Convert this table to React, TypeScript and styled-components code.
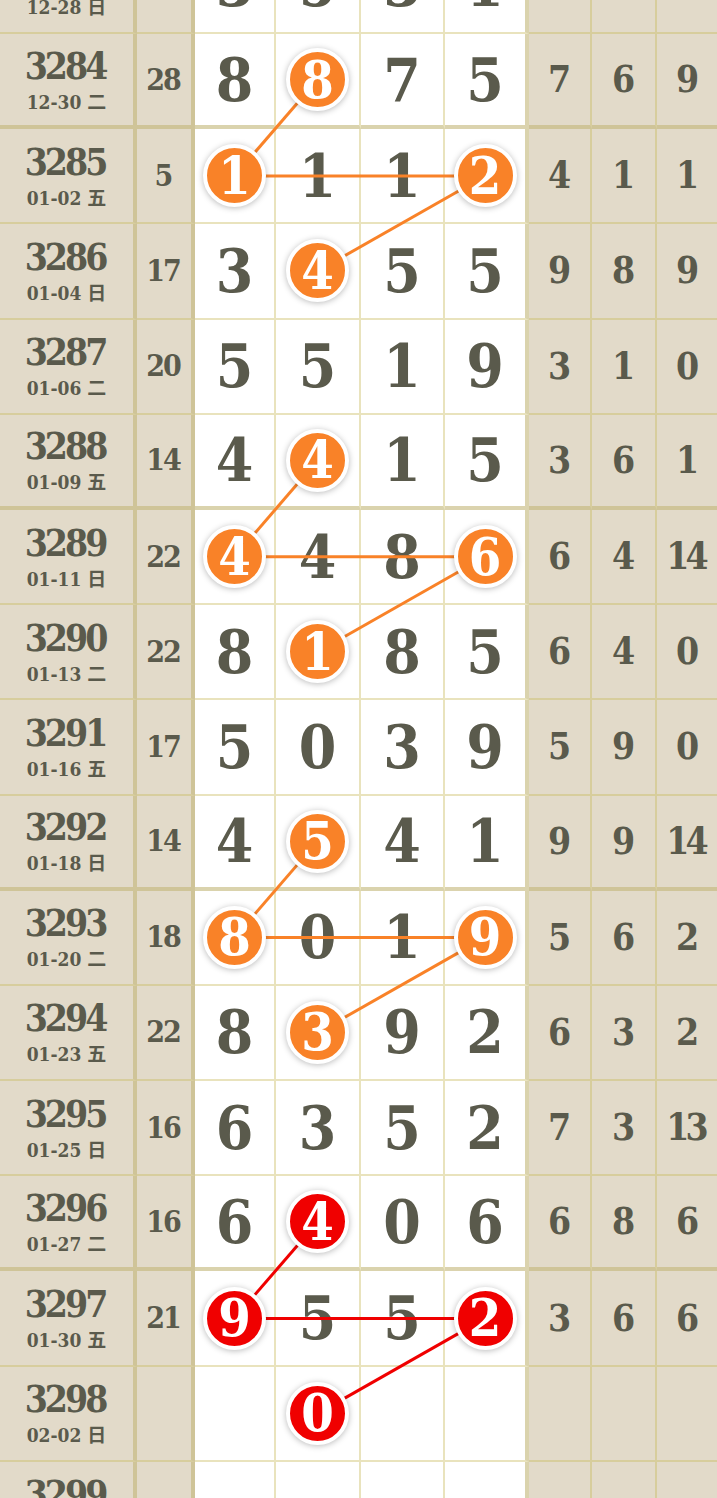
import React from "react";
import styled, { createGlobalStyle } from "styled-components";

const SERIF = `"DejaVu Serif Condensed", "DejaVu Serif", "Noto Sans CJK SC", serif`;
const INK = "#5a5a4c";
const BEIGE = "#e2dac9";
const THIN = "rgba(200, 185, 90, 0.4)";
const THICK = "rgba(195, 182, 120, 0.6)";
const ORANGE = "#f98228";
const RED = "#f00000";
const ROW_H = 95.2;
const TOP_OFFSET = -61.2;

// column widths and right border width of each column
const COLS = [137, 58, 81, 85, 84, 84, 63, 65, 61];
const EDGES = [4, 4, 2, 2, 2, 4, 2, 2, 0];

const GlobalStyle = createGlobalStyle`
  html, body {
    margin: 0;
    padding: 0;
    background: #fff;
  }
  body {
    width: 717px;
    height: 1498px;
    overflow: hidden;
  }
`;

type Draw = {
  issue: number;
  date: string;
  sum?: number;
  digits: (number | null)[];
  extra: (number | null)[];
};

const DRAWS: Draw[] = [
  { issue: 3283, date: "12-28 日", sum: 12, digits: [3, 5, 3, 1], extra: [null, null, null] },
  { issue: 3284, date: "12-30 二", sum: 28, digits: [8, 8, 7, 5], extra: [7, 6, 9] },
  { issue: 3285, date: "01-02 五", sum: 5, digits: [1, 1, 1, 2], extra: [4, 1, 1] },
  { issue: 3286, date: "01-04 日", sum: 17, digits: [3, 4, 5, 5], extra: [9, 8, 9] },
  { issue: 3287, date: "01-06 二", sum: 20, digits: [5, 5, 1, 9], extra: [3, 1, 0] },
  { issue: 3288, date: "01-09 五", sum: 14, digits: [4, 4, 1, 5], extra: [3, 6, 1] },
  { issue: 3289, date: "01-11 日", sum: 22, digits: [4, 4, 8, 6], extra: [6, 4, 14] },
  { issue: 3290, date: "01-13 二", sum: 22, digits: [8, 1, 8, 5], extra: [6, 4, 0] },
  { issue: 3291, date: "01-16 五", sum: 17, digits: [5, 0, 3, 9], extra: [5, 9, 0] },
  { issue: 3292, date: "01-18 日", sum: 14, digits: [4, 5, 4, 1], extra: [9, 9, 14] },
  { issue: 3293, date: "01-20 二", sum: 18, digits: [8, 0, 1, 9], extra: [5, 6, 2] },
  { issue: 3294, date: "01-23 五", sum: 22, digits: [8, 3, 9, 2], extra: [6, 3, 2] },
  { issue: 3295, date: "01-25 日", sum: 16, digits: [6, 3, 5, 2], extra: [7, 3, 13] },
  { issue: 3296, date: "01-27 二", sum: 16, digits: [6, 4, 0, 6], extra: [6, 8, 6] },
  { issue: 3297, date: "01-30 五", sum: 21, digits: [9, 5, 5, 2], extra: [3, 6, 6] },
  { issue: 3298, date: "02-02 日", digits: [null, 0, null, null], extra: [null, null, null] },
  { issue: 3299, date: "02-04 二", digits: [null, null, null, null], extra: [null, null, null] },
];

// each group: ball in col 2, then cols 1 & 4 on the next draw, then col 2 again
const GROUPS = [
  { start: 1, hot: false },
  { start: 5, hot: false },
  { start: 9, hot: false },
  { start: 13, hot: true },
];

type Mark = { row: number; col: number; hot: boolean };

const MARKS: Mark[] = GROUPS.flatMap((g) => [
  { row: g.start, col: 1, hot: g.hot },
  { row: g.start + 1, col: 0, hot: g.hot },
  { row: g.start + 1, col: 3, hot: g.hot },
  { row: g.start + 2, col: 1, hot: g.hot },
]);

const isThick = (row: number) => row % 4 === 1;

const colCenter = (digitCol: number) => {
  const idx = digitCol + 2;
  let x = 0;
  for (let i = 0; i < idx; i++) x += COLS[i];
  return x + (COLS[idx] - EDGES[idx]) / 2;
};

const rowCenter = (row: number) =>
  row * ROW_H + (ROW_H - (isThick(row) ? 4 : 2)) / 2;

const Page = styled.div`
  width: 717px;
  height: 1498px;
  overflow: hidden;
`;

const Table = styled.div`
  position: relative;
  margin-top: ${TOP_OFFSET}px;
  width: ${COLS.reduce((a, b) => a + b, 0)}px;
`;

const Row = styled.div`
  display: grid;
  grid-template-columns: ${COLS.map((c) => `${c}px`).join(" ")};
  height: ${ROW_H}px;
`;

const Cell = styled.div<{ $white?: boolean; $edge: number; $thick: boolean }>`
  box-sizing: border-box;
  display: flex;
  flex-direction: column;
  align-items: center;
  justify-content: center;
  background: ${(p) => (p.$white ? "#fff" : BEIGE)};
  border-right: ${(p) =>
    p.$edge === 0 ? "none" : `${p.$edge}px solid ${p.$edge > 2 ? THICK : THIN}`};
  border-bottom: ${(p) => (p.$thick ? `4px solid ${THICK}` : `2px solid ${THIN}`)};
  font-family: ${SERIF};
  font-weight: bold;
  color: ${INK};
`;

// negative tracking, with the trailing gap given back so the text stays centred
const Tight = styled.span<{ $size: number; $track: number }>`
  font-size: ${(p) => p.$size}px;
  line-height: 1;
  letter-spacing: ${(p) => -p.$track}px;
  padding-right: ${(p) => p.$track}px;
`;

const IssueNo = styled(Tight)`
  line-height: 38px;
`;

const IssueDate = styled.span`
  font-size: 19px;
  line-height: 22px;
  margin-top: 6px;
  white-space: nowrap;
`;

const Digit = styled.span`
  font-size: 60px;
  line-height: 1;
`;

const Ball = styled.span<{ $hot: boolean }>`
  position: relative;
  z-index: 2;
  width: 55px;
  height: 55px;
  border-radius: 50%;
  border: 4px solid #fff;
  background: ${(p) => (p.$hot ? RED : ORANGE)};
  box-shadow: 0 1px 6px rgba(0, 0, 0, 0.28);
  display: flex;
  align-items: center;
  justify-content: center;
  color: #fff;
  font-family: ${SERIF};
  font-weight: bold;
  font-size: 52px;
  line-height: 1;
`;

const Trend = styled.svg`
  position: absolute;
  left: 0;
  top: 0;
  z-index: 1;
  pointer-events: none;
`;

const TrendLines: React.FC = () => {
  const height = DRAWS.length * ROW_H;
  const segs: { x1: number; y1: number; x2: number; y2: number; hot: boolean }[] = [];
  for (let i = 0; i < MARKS.length; i += 4) {
    const group = MARKS.slice(i, i + 4);
    for (let j = 0; j < 3; j++) {
      const a = group[j];
      const b = group[j + 1];
      segs.push({
        x1: colCenter(a.col),
        y1: rowCenter(a.row),
        x2: colCenter(b.col),
        y2: rowCenter(b.row),
        hot: a.hot,
      });
    }
  }
  return (
    <Trend width={717} height={height} viewBox={`0 0 717 ${height}`}>
      {segs.map((s, i) => (
        <line
          key={i}
          x1={s.x1}
          y1={s.y1}
          x2={s.x2}
          y2={s.y2}
          stroke={s.hot ? RED : ORANGE}
          strokeWidth={3}
        />
      ))}
    </Trend>
  );
};

export default function App() {
  return (
    <Page>
      <GlobalStyle />
      <Table>
        {DRAWS.map((d, row) => {
          const thick = isThick(row);
          return (
            <Row key={d.issue}>
              <Cell $edge={EDGES[0]} $thick={thick}>
                <IssueNo $size={37} $track={3}>
                  {d.issue}
                </IssueNo>
                <IssueDate>{d.date}</IssueDate>
              </Cell>
              <Cell $edge={EDGES[1]} $thick={thick}>
                {d.sum !== undefined && (
                  <Tight $size={30} $track={2}>
                    {d.sum}
                  </Tight>
                )}
              </Cell>
              {d.digits.map((n, col) => {
                const mark = MARKS.find((m) => m.row === row && m.col === col);
                return (
                  <Cell key={col} $white $edge={EDGES[col + 2]} $thick={thick}>
                    {n === null ? null : mark ? (
                      <Ball $hot={mark.hot}>{n}</Ball>
                    ) : (
                      <Digit>{n}</Digit>
                    )}
                  </Cell>
                );
              })}
              {d.extra.map((n, col) => (
                <Cell key={`e${col}`} $edge={EDGES[col + 6]} $thick={thick}>
                  {n !== null && (
                    <Tight $size={37} $track={4}>
                      {n}
                    </Tight>
                  )}
                </Cell>
              ))}
            </Row>
          );
        })}
        <TrendLines />
      </Table>
    </Page>
  );
}
